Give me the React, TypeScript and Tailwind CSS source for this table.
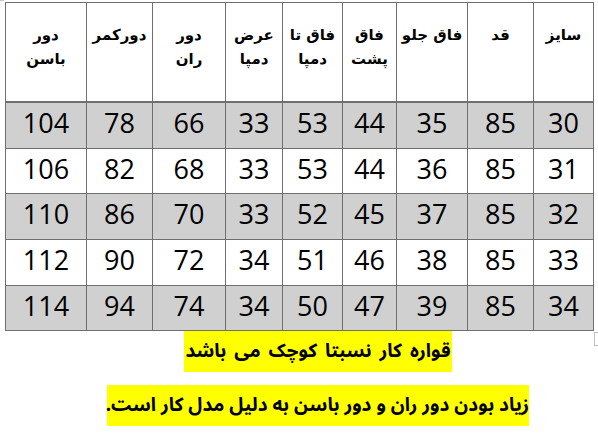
const headers: string[][] = [
  ['سایز'],
  ['قد'],
  ['فاق جلو'],
  ['فاق', 'پشت'],
  ['فاق تا', 'دمپا'],
  ['عرض', 'دمپا'],
  ['دور', 'ران'],
  ['دورکمر'],
  ['دور', 'باسن'],
]

const rows: number[][] = [
  [30, 85, 35, 44, 53, 33, 66, 78, 104],
  [31, 85, 36, 44, 53, 33, 68, 82, 106],
  [32, 85, 37, 45, 52, 33, 70, 86, 110],
  [33, 85, 38, 46, 51, 34, 72, 90, 112],
  [34, 85, 39, 47, 50, 34, 74, 94, 114],
]

const rowH = ['h-[46px]', 'h-[45px]', 'h-[46px]', 'h-[46px]', 'h-[45px]']

export default function App() {
  return (
    <div className="relative w-[598px] h-[435px] bg-white overflow-hidden">
      {/* table handle */}
      <div className="absolute left-0 top-0 w-[4px] h-[1px] bg-[#c8c8c8]" />

      <div className="pt-[2px] pl-[5px]">
        <div
          dir="rtl"
          className="grid w-[589px] grid-cols-[60px_66px_71px_54px_60px_57px_73px_66px_81px] border-t border-r border-[#6f6f6f]"
        >
          {headers.map((lines, i) => (
            <div
              key={i}
              className="h-[100px] border-l border-b-2 border-[#6f6f6f] pt-[20px] text-center text-[15px] font-bold leading-[24px] text-black"
              style={{ fontFamily: '"DejaVu Sans", sans-serif' }}
            >
              {lines.map((l, j) => (
                <div key={j}>{l}</div>
              ))}
            </div>
          ))}

          {rows.map((r, ri) =>
            r.map((v, ci) => (
              <div
                key={`${ri}-${ci}`}
                className={`${rowH[ri]} border-l border-b border-[#6f6f6f] flex items-center justify-center pb-[4px] text-[27px] text-black ${ri % 2 === 0 ? 'bg-[#d0d0d0]' : 'bg-white'}`}
                style={{ fontFamily: '"Open Sans", sans-serif' }}
              >
                {v}
              </div>
            ))
          )}
        </div>
      </div>

      {/* resize handle */}
      <div className="absolute left-[594px] top-[332px] w-[6px] h-[14px] border border-[#c0c0c0]" />

      {/* notes */}
      <div
        dir="rtl"
        className="flex flex-col items-center pl-[38px] text-[19px] font-bold text-black"
        style={{ fontFamily: '"Noto Sans Arabic", "DejaVu Sans", sans-serif' }}
      >
        <span className="inline-block h-[41px] w-[268px] bg-[#ffff00] text-center leading-[41px] whitespace-nowrap [word-spacing:3px]">
          قواره کار نسبتا کوچک می باشد
        </span>
        <span className="mt-[13px] inline-block h-[41px] w-[422px] bg-[#ffff00] text-center leading-[41px] whitespace-nowrap">
          زیاد بودن دور ران و دور باسن به دلیل مدل کار است.
        </span>
      </div>
    </div>
  )
}
